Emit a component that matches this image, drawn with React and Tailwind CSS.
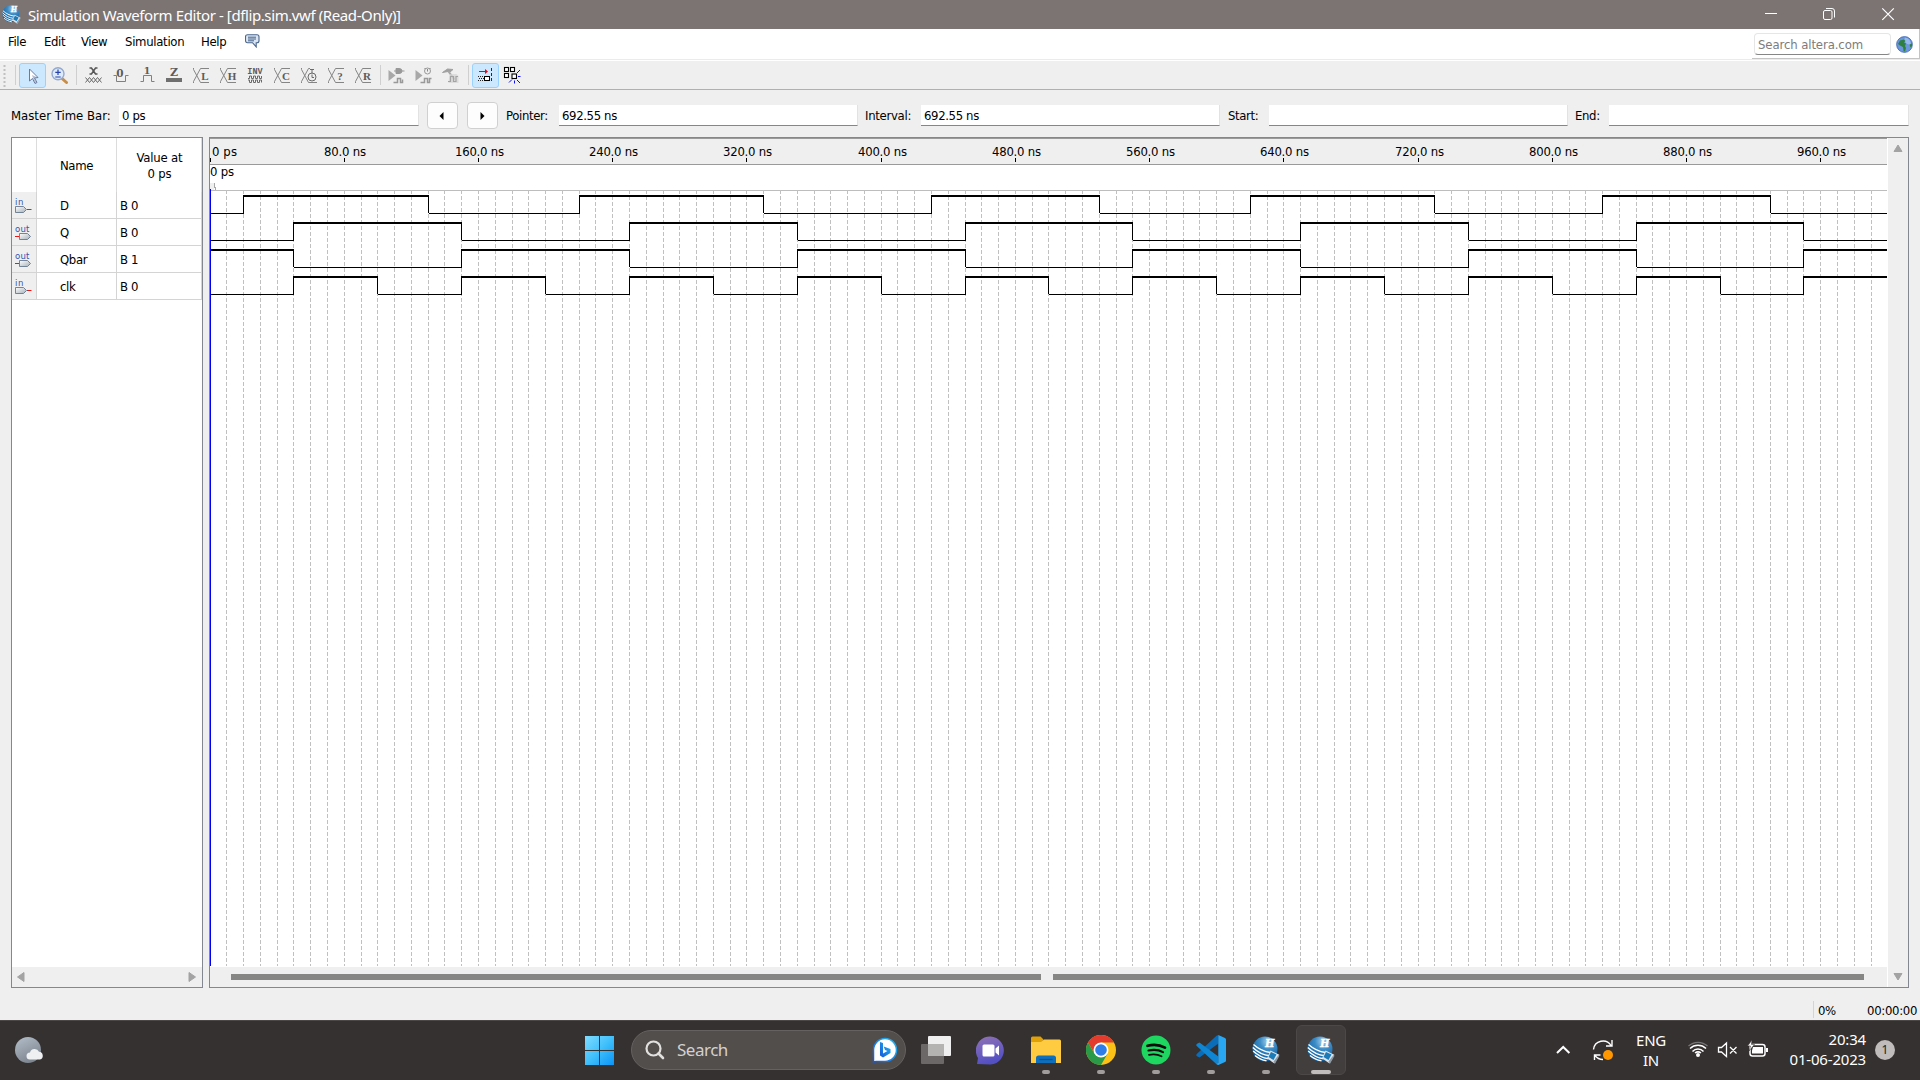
import React from "react";

const UI = "[font-family:'DejaVu_Sans_Condensed','DejaVu_Sans',sans-serif] [font-stretch:condensed] text-[13px] leading-4 tracking-[-0.36px] text-black whitespace-nowrap";

function QuartusLogo({ size }) {
  return (
    <svg width={size} height={size} viewBox="0 0 28 28" className="shrink-0">
      <defs>
        <radialGradient id="ball" cx="0.62" cy="0.2" r="0.8">
          <stop offset="0" stopColor="#a9cfea" />
          <stop offset="0.4" stopColor="#3c8cc6" />
          <stop offset="1" stopColor="#075a9c" />
        </radialGradient>
      </defs>
      <circle cx="13" cy="13" r="12.5" fill="url(#ball)" />
      <path d="M1.500 8.500C6 12.500 11 15.500 18.500 16.500M.8 11.500C5.500 16 10.500 19 17.500 19.800M1.200 15C5.500 19.200 10 21.800 16.500 22.800M3 19.500C6.500 22.500 10 24 14.500 24.800" fill="none" stroke="#fff" strokeWidth="1.400" />
      <text x="13" y="11" fontSize="12" fontWeight="bold" fontStyle="italic" fontFamily="Liberation Serif" fill="#fff" stroke="#fff" strokeWidth=".5">H</text>
      <path d="M18.500 14.500l8.800 4.200-4.800 8.800-7.500-5.200z" fill="#dbe4ea" />
      <path d="M19 16l5.500 2.500-3 5.500-5-3z" fill="#1b7ab8" />
      <path d="M21.500 25.500l5-6.500 1 .8-4.500 8z" fill="#8d9aa4" />
    </svg>
  );
}

function TitleBar() {
  return (
    <div className="flex h-[29px] shrink-0 items-center bg-[#7b7473] pl-0.5">
      <QuartusLogo size={19} />
      <span className="ml-[7px] text-[15px] leading-5 tracking-[-0.4px] whitespace-nowrap text-white [font-family:'Noto_Sans',sans-serif]">
        Simulation Waveform Editor - [dflip.sim.vwf (Read-Only)]
      </span>
      <svg width="200" height="29" viewBox="1720 0 200 29" className="ml-auto" fill="none" stroke="#fff">
        <path d="M1765 13.500h12" />
        <rect x="1823.500" y="10.500" width="8.500" height="9" rx="1.500" />
        <path d="M1826 8.500h6q2.500 0 2.500 2.500v6.500" />
        <path d="M1882.300 8.300l11.500 11.500M1893.800 8.300l-11.500 11.500" strokeWidth="1.200" />
      </svg>
    </div>
  );
}

function MenuBar() {
  return (
    <div className="flex h-[31px] shrink-0 border-b border-[#ebebeb] bg-white">
      <div className={`flex pl-2 pt-[5px] ${UI}`}>
        <span className="w-9">File</span>
        <span className="w-[37px]">Edit</span>
        <span className="w-11">View</span>
        <span className="w-19 tracking-[-0.3px]">Simulation</span>
        <span className="w-[44px]">Help</span>
        <svg width="16" height="14" viewBox="0 0 16 14" fill="none">
          <path d="M2.500.700h9.500q2 0 2 2v4q0 2-2 2h-.800v4.200L7.500 8.700h-5q-2 0-2-2v-4q0-2 2-2z" fill="#d9e5f3" stroke="#4a668c" strokeWidth="1.100" />
          <path d="M3 3.200h8M3 5h8M3 6.800h6" stroke="#39557e" strokeWidth="0.900" />
        </svg>
      </div>
      <div className="ml-auto flex h-[30px] w-[168px] items-start border-r border-b border-[#c4c4c4] pt-1 pl-[2px]">
        <div className="flex h-[22px] w-[137px] items-center rounded-sm border border-b-[#868686] border-[#e6e6e6] bg-white pt-0.5 pl-[3px] text-[13px] tracking-[-0.1px] whitespace-nowrap text-[#7c7c7c] [font-family:'DejaVu_Sans_Condensed','DejaVu_Sans',sans-serif] [font-stretch:condensed]">
          Search altera.com
        </div>
        <svg width="17" height="17" viewBox="0 0 17 17" className="mt-[3px] ml-[5px]">
          <circle cx="8.500" cy="8.500" r="7.900" fill="#6a96dc" stroke="#3c64b0" strokeWidth="0.800" />
          <path d="M9 1.500a7 7 0 0 1 6 7.500l-4-1-3-3z" fill="#a9c6f4" opacity=".7" />
          <path d="M2 8l2-3.500 4-1 1.500 1.500-1.500 1.500 2 1-1 2.500 1 2-1 3.500-1.500-.5-.5-4-3-1.500zM13.500 8.500l2.500-1v2.500l-1.500 1.500z" fill="#2f8040" />
        </svg>
      </div>
    </div>
  );
}

const G = "#6a6a6a";

function Glyph({ x = 10.5, y = 13, size = 11, font = "Liberation Serif", children }) {
  return (
    <text x={x} y={y} fontSize={size} fontWeight="bold" fontFamily={font} textAnchor="middle" fill="#5c5c5c">
      {children}
    </text>
  );
}

function Tool({ active, children }) {
  return (
    <div className={active ? "flex h-[25px] w-[27px] items-center justify-center rounded-[3px] border border-[#99d1ff] bg-[#cce8ff]" : "flex h-[25px] w-[27px] items-center justify-center"}>
      <svg width="17" height="17" viewBox="0 0 17 17" className="shrink-0 overflow-visible">{children}</svg>
    </div>
  );
}

function Divider({ className }) {
  return <div className={`h-5 w-px shrink-0 bg-[#cfcfcf] ${className}`} />;
}

function Letter({ children }) {
  return (
    <g>
      <path d="M.5 1v1.500L7.500 15.500H16M.5 16v-1.500L7.500 1.500H16" fill="none" stroke="#858585" />
      <Glyph x={12} y={12.5} size={11}>{children}</Glyph>
    </g>
  );
}

function ToolBar() {
  return (
    <div className="flex h-[30px] shrink-0 items-center border-t border-b border-t-white border-b-[#b0b0b0] bg-[#efefef]">
      <svg width="3" height="23" viewBox="0 0 3 23" className="ml-[3px]">
        <path d="M1.500 1v22" stroke="#c0c0c0" strokeWidth="2" strokeDasharray="2 2" />
      </svg>
      <Divider className="ml-[9px] mr-[3px]" />
      <Tool active>
        <path d="M5.500 2v12l3-2.500 2.500 5 2-1-2.500-4.500 3.500-.5z" fill="#fff" stroke="#6a7aa0" />
        <path d="M8 8l5.500 2.500-3.500.5 2.500 4.500-1.500.5-2-5z" fill="#8290b0" opacity=".6" />
      </Tool>
      <Tool>
        <path d="M10.500 11l5 4.500" stroke="#c98d45" strokeWidth="3" strokeLinecap="round" />
        <circle cx="7" cy="6.800" r="6" fill="#dceafa" stroke="#94a9cf" strokeWidth="1.400" />
        <path d="M7 2.500v5.500M4.300 5.300h5.400M4.300 10h5.400" stroke="#2743ab" strokeWidth="1.200" />
      </Tool>
      <Divider className="ml-[3px] mr-[3px]" />
      <Tool>
        <path d="M4.500 1h2l4 6h2M4.500 7h2l4-6h2" fill="none" stroke="#555" strokeWidth="1.500" />
        <path d="M.5 10.500l4 5 4-5 4 5 4-5M.5 15.500l4-5 4 5 4-5 4 5" fill="none" stroke={G} />
      </Tool>
      <Tool>
        <path d="M1.500 8.500h3v6h9v-6h3" fill="none" stroke="#808080" />
        <Glyph x={8} y={10} size={10.5} font="DejaVu Serif">0</Glyph>
      </Tool>
      <Tool>
        <path d="M1.500 14.500h3v-6h8v6h3" fill="none" stroke="#808080" />
        <Glyph x={8} y={7} size={9.5} font="DejaVu Serif">1</Glyph>
      </Tool>
      <Tool>
        <Glyph x={8} y={8.5} size={11} font="DejaVu Serif">Z</Glyph>
        <rect x="0" y="11" width="16" height="4" fill="#6f6f6f" />
      </Tool>
      <Tool><Letter>L</Letter></Tool>
      <Tool><Letter>H</Letter></Tool>
      <Tool>
        <Glyph x={8} y={6.5} size={8.5} font="Liberation Mono">INV</Glyph>
        <path d="M1 11.500h1.500v-2.500h2v2.500h2v-2.500h2v2.500h2v-2.500h2v2.500h2v-2.500M1 13h1.500v2.500h2v-2.500h2v2.500h2v-2.500h2v2.500h2v-2.500h2v2.500" fill="none" stroke={G} />
      </Tool>
      <Tool><Letter>C</Letter></Tool>
      <Tool>
        <path d="M.5 1v1.500L7.500 15.500H16M.5 16v-1.500L7.500 1.500H9" fill="none" stroke="#858585" />
        <circle cx="11" cy="10" r="4" fill="#efefef" stroke={G} />
        <path d="M11 2v4.500M9 2.500h4M11 7.500v3h2" stroke={G} fill="none" />
      </Tool>
      <Tool><Letter>?</Letter></Tool>
      <Tool><Letter>R</Letter></Tool>
      <Divider className="ml-[3px] mr-[2px]" />
      <Tool>
        <path d="M.5 3v11l7-5.500z" fill="#a8a8a8" />
        <path d="M6 4h2M14 4h2.500M8 1.500h3q3 0 3 2.500t-3 2.500h-3z" fill="#999" stroke="#999" />
        <path d="M5.500 15.500h4v-4h3v4h2v-3" fill="none" stroke="#999" strokeWidth="1.500" />
      </Tool>
      <Tool>
        <path d="M.5 3v11l7-5.500z" fill="#a8a8a8" />
        <circle cx="12.500" cy="4" r="3" fill="#eee" stroke="#999" />
        <path d="M12.500 2v2.500M9.500 1l1 1M15.500 1l-1 1" stroke="#888" />
        <path d="M5.500 15.500h4v-4h3v4h2v-4h2" fill="none" stroke="#999" strokeWidth="1.500" />
      </Tool>
      <Tool>
        <path d="M.5 5.500l5-3.500 5.500.5-3 2.500-2-.5z" fill="#a0a0a0" stroke="#a0a0a0" />
        <path d="M6.500 4.500l6 8" stroke="#a8a8a8" strokeWidth="2" />
        <path d="M7.500 7h7l2 2v7h-10z" fill="#d4d4d4" opacity=".7" />
        <path d="M6 14.500h2.500v-5h3v5h2.500v-5h2" fill="none" stroke="#a3a3a3" strokeWidth="1.200" />
      </Tool>
      <Divider className="ml-1 mr-[3px]" />
      <Tool active>
        <path d="M2 4.500h8" stroke="#f00010" />
        <path d="M8 2l3 2.500-3 2.500z" fill="#f00010" />
        <path d="M14.500 1v15" stroke="#1010f0" strokeDasharray="3 2" />
        <path d="M1 9.500h7M1 13.500h7M2 11.500h5" stroke="#222" strokeDasharray="1 1" />
        <rect x="7.500" y="9.500" width="5" height="4" fill="#fff" stroke="#000" />
      </Tool>
      <Tool>
        <g fill="#fff" stroke="#000" strokeWidth="1.100">
          <rect x=".5" y=".5" width="4" height="4" />
          <rect x="6.500" y=".5" width="4" height="4" />
          <rect x=".5" y="6.500" width="4" height="4" />
          <rect x="8" y="7" width="4.500" height="4.500" />
        </g>
        <path d="M13 6l3-3M14 9.500h2.500M13 13l3 3M10.500 13.500v3M8 12.500l-3 3" stroke="#1010f0" />
      </Tool>
    </div>
  );
}

function Field({ className, children }) {
  return <div className={`flex h-[21px] items-center border-r border-b border-r-[#e2e2e2] border-b-[#868686] bg-white pt-px pl-[3px] ${className}`}>{children}</div>;
}

function StepButton({ d, className }) {
  return (
    <div className="flex h-[27px] w-[31px] items-center justify-center rounded border border-[#d0d0d0] bg-[#fdfdfd]">
      <svg width="5" height="8" viewBox="0 0 5 8" className={className}><path d={d} fill="#000" /></svg>
    </div>
  );
}

function TimeRow() {
  return (
    <div className={`flex h-[47px] shrink-0 items-center pt-[4px] pl-[11px] ${UI}`}>
      <span className="w-[108px] tracking-[0px]">Master Time Bar:</span>
      <Field className="w-[300px]">0 ps</Field>
      <div className="ml-2 flex gap-[9px]">
        <StepButton d="M4.500 0v8L.5 4z" className="mr-[3px]" />
        <StepButton d="M.5 0v8L4.500 4z" />
      </div>
      <span className="ml-2 w-[53px]">Pointer:</span>
      <Field className="w-[299px]">692.55 ns</Field>
      <span className="ml-[7px] w-14 tracking-[-0.3px]">Interval:</span>
      <Field className="w-[299px]">692.55 ns</Field>
      <span className="ml-2 w-[41px]">Start:</span>
      <Field className="w-[299px]" />
      <span className="ml-[7px] w-[34px]">End:</span>
      <Field className="w-[300px]" />
    </div>
  );
}

function PinIcon({ kind }) {
  return (
    <svg width="18" height="18" viewBox="0 0 18 18">
      <defs>
        <linearGradient id="pin" x1="0" y1="0" x2="1" y2="1">
          <stop offset="0" stopColor="#fff" />
          <stop offset="1" stopColor="#a4afb9" />
        </linearGradient>
      </defs>
      <text x="0" y="8" fontSize="9.500" fontFamily="DejaVu Sans" fill="#2f55b5" textLength={kind === "in" ? 8 : 14}>{kind}</text>
      {kind === "in" ? (
        <g>
          <path d="M.5 9.500h8l3 3-3 3h-8z" fill="url(#pin)" stroke="#66788c" strokeWidth=".9" />
          <path d="M12 12.500h4.500" stroke="#f01515" />
        </g>
      ) : (
        <g>
          <path d="M4.500 9.500h8l3 3-3 3h-8z" fill="url(#pin)" stroke="#66788c" strokeWidth=".9" />
          <path d="M0 12.500h4" stroke="#f01515" />
        </g>
      )}
    </svg>
  );
}

const SIGNALS = [
  { kind: "in", name: "D", value: "B 0" },
  { kind: "out", name: "Q", value: "B 0" },
  { kind: "out", name: "Qbar", value: "B 1" },
  { kind: "in", name: "clk", value: "B 0" },
];

function SignalPanel() {
  return (
    <div className={`flex w-48 shrink-0 flex-col border border-[#828790] bg-white ${UI}`}>
      <div className="flex h-[54px]">
        <div className="w-[25px] border-r border-[#dcdcdc]" />
        <div className="flex w-20 items-center justify-center border-r border-[#dcdcdc] pt-0.5">Name</div>
        <div className="flex w-[85px] items-center justify-center border-r border-[#dcdcdc] pt-0.5 pl-px text-center tracking-[-0.2px]">Value at<br />0 ps</div>
      </div>
      {SIGNALS.map((s) => (
        <div key={s.name} className="flex h-[27px]">
          <div className="w-[25px] border-r border-b border-[#d4d4d4] bg-[#efefef] pt-[5px] pl-[3px]"><PinIcon kind={s.kind} /></div>
          <div className="flex w-20 items-center border-r border-b border-[#d4d4d4] pt-0.5 pl-[23px]">{s.name}</div>
          <div className="flex w-[85px] items-center border-r border-b border-[#d4d4d4] pt-0.5 pl-[3px]">{s.value}</div>
        </div>
      ))}
      <div className="mt-auto flex h-5 items-center justify-between bg-[#efefef] pr-[6px] pl-[5px]">
        <svg width="8" height="10" viewBox="0 0 8 10"><path d="M7 .5v9L.5 5z" fill="#a3a3a3" stroke="#a3a3a3" /></svg>
        <svg width="8" height="10" viewBox="0 0 8 10"><path d="M1 .5v9L7.500 5z" fill="#a3a3a3" stroke="#a3a3a3" /></svg>
      </div>
    </div>
  );
}

const LEFT = 210;
const RIGHT = 1887;
const at = (ns) => Math.floor(LEFT + ns * 1.67785) + 0.5;

const WAVES = [
  { high: 196, start: 0, edges: [20, 130, 220, 330, 430, 530, 620, 730, 830, 930] },
  { high: 223, start: 0, edges: [50, 150, 250, 350, 450, 550, 650, 750, 850, 950] },
  { high: 250, start: 1, edges: [50, 150, 250, 350, 450, 550, 650, 750, 850, 950] },
  { high: 277, start: 0, edges: Array.from({ length: 19 }, (_, i) => 50 + i * 50) },
];

function Wave({ high, start, edges }) {
  const xs = [LEFT, ...edges.map(at), RIGHT];
  let highs = "";
  let lows = "";
  let sides = "";
  for (let i = 0; i < xs.length - 1; i++) {
    const isHigh = (i + start) % 2 === 1;
    if (isHigh) highs += `M${xs[i] - 0.5} ${high}H${xs[i + 1] + 0.5}`;
    else lows += `M${xs[i]} ${high + 17.5}H${xs[i + 1]}`;
    if (i > 0) sides += `M${xs[i]} ${high - 1}V${high + 17}`;
  }
  return (
    <g stroke="#000" fill="none">
      <path d={highs} strokeWidth="2" />
      <path d={lows} />
      <path d={sides} />
    </g>
  );
}

function Plot() {
  const grid = Array.from({ length: 99 }, (_, i) => at((i + 1) * 10));
  const ticks = Array.from({ length: 13 }, (_, i) => i * 80);
  const font = { fontFamily: "'DejaVu Sans Condensed','DejaVu Sans'", fontStretch: "condensed", fontSize: 13 };
  return (
    <svg width="1677" height="829" viewBox="210 138 1677 829" className="shrink-0" shapeRendering="crispEdges">
      <rect x="210" y="138" width="1677" height="829" fill="#fff" />
      <rect x="210" y="138" width="1677" height="26" fill="#efefef" />
      <path d="M210 138.500H1887M210 164.500H1887" stroke="#9a9a9a" />
      <path d="M210 190.500H1887" stroke="#bdbdbd" />
      {ticks.map((t) => (
        <g key={t}>
          <path d={`M${at(t)} 158V162`} stroke="#000" />
          <text x={t === 0 ? 212 : at(t) - (t < 100 ? 20.5 : 23.5)} y="156" textLength={t === 0 ? 25 : t < 100 ? 42 : 49} style={font}>
            {t === 0 ? "0 ps" : `${t}.0 ns`}
          </text>
        </g>
      ))}
      <text x="210" y="176" textLength="24" style={font}>0 ps</text>
      <rect x="210" y="183" width="4" height="7" fill="#efefef" />
      <path d="M214.500 183v4h1v3" stroke="#a8a8a8" fill="none" />
      {grid.map((x) => (
        <path key={x} d={`M${x} 190V966`} stroke="#c0c0c0" strokeDasharray="4 2" />
      ))}
      {WAVES.map((w) => <Wave key={w.high} {...w} />)}
      <path d="M210.500 189V966" stroke="#0000f5" />
    </svg>
  );
}

function PlotPanel() {
  return (
    <div className="flex w-[1700px] shrink-0 border border-[#828790] bg-[#efefef]">
      <div className="flex w-[1677px] flex-col">
        <Plot />
        <div className="flex h-5 items-center justify-center gap-3">
          <div className="ml-[-2px] h-1.5 w-[810px] bg-[#868684]" />
          <div className="h-1.5 w-[811px] bg-[#868684]" />
        </div>
      </div>
      <div className="flex flex-1 flex-col items-center justify-between border-l border-white py-[6px] pr-px">
        <svg width="10" height="9" viewBox="0 0 10 9"><path d="M1 7.500h8L5 1z" fill="#a3a3a3" stroke="#a3a3a3" /></svg>
        <svg width="10" height="9" viewBox="0 0 10 9"><path d="M1 1.500h8L5 8z" fill="#a3a3a3" stroke="#a3a3a3" /></svg>
      </div>
    </div>
  );
}

function StatusBar() {
  return (
    <div className={`flex h-8 shrink-0 justify-end pt-[15px] ${UI}`}>
      <div className="-mt-0.5 h-[17px] w-px bg-[#d4d4d4]" />
      <span className="w-[53px] pl-1">0%</span>
      <span className="w-[53px] tracking-[-0.3px]">00:00:00</span>
    </div>
  );
}

function AppButton({ children, dot = true }) {
  return (
    <div className="flex h-[50px] w-[55px] flex-col items-center">
      <div className="flex h-[45px] items-center pt-[5px]">{children}</div>
      {dot && <div className="h-1 w-2 rounded-full bg-[#a09d9c]" />}
    </div>
  );
}

function TaskBar() {
  const seg = "[font-family:'Noto_Sans',sans-serif] whitespace-nowrap text-white";
  return (
    <div className="flex h-[60px] shrink-0 items-center border-t border-[#4b4746] bg-[#353130] pb-px">
      <svg width="30" height="28" viewBox="0 0 30 28" className="ml-[14px]">
        <defs>
          <linearGradient id="moon" x1="0" y1="0" x2="0.5" y2="1">
            <stop offset="0" stopColor="#b4bfcb" />
            <stop offset="1" stopColor="#7e8690" />
          </linearGradient>
        </defs>
        <circle cx="14" cy="14" r="13" fill="url(#moon)" />
        <path d="M16 23.500a3.500 3.500 0 0 1 0-7 4.800 4.800 0 0 1 9-.8 4 4 0 0 1 1 7.800z" fill="#eef0f2" />
      </svg>
      <svg width="29" height="29" viewBox="0 0 29 29" className="ml-[541px]">
        <defs>
          <linearGradient id="win" x1="0" y1="0" x2="1" y2="1">
            <stop offset="0" stopColor="#7fdcff" />
            <stop offset="0.500" stopColor="#40c0fb" />
            <stop offset="1" stopColor="#0a94f8" />
          </linearGradient>
        </defs>
        <path d="M0 0h14v14H0zM15 0h14v14H15zM0 15h14v14H0zM15 15h14v14H15z" fill="url(#win)" />
      </svg>
      <div className="ml-[17px] flex h-10 w-[275px] items-center rounded-full border border-[#656160] bg-[#524e4c]">
        <svg width="20" height="20" viewBox="0 0 20 20" fill="none" stroke="#e2e0df" strokeWidth="2.200" className="ml-[13px]">
          <circle cx="8.500" cy="8.500" r="7" />
          <path d="M13.500 13.500l4.500 4.500" strokeLinecap="round" strokeWidth="2.600" />
        </svg>
        <span className="ml-3 text-[17px] tracking-[-0.5px] text-[#d3d1d0] [font-family:'Noto_Sans',sans-serif]">Search</span>
        <svg width="26" height="26" viewBox="0 0 26 26" className="ml-auto mr-[7px]">
          <defs>
            <linearGradient id="bing" x1="1" y1="0" x2="0" y2="1">
              <stop offset="0" stopColor="#22b8ee" />
              <stop offset="1" stopColor="#1657d8" />
            </linearGradient>
          </defs>
          <path d="M1.500 25V13A11.500 11.500 0 1 1 13 24.500H4z" fill="#fff" stroke="url(#bing)" strokeWidth="1.500" />
          <path d="M8 5l3 1v10.500l4.500-2.500-2.500-1-1.300-3.500 6.800 2.500v4L11 20.500l-3-2z" fill="url(#bing)" />
        </svg>
      </div>
      <svg width="30" height="28" viewBox="0 0 30 28" className="ml-[15px]">
        <rect x="7" y="0" width="23" height="20" rx="1" fill="#efefef" />
        <rect x="0" y="8" width="23" height="20" rx="1" fill="#6b6867" />
        <rect x="7" y="8" width="16" height="12" fill="#b5b3b2" />
      </svg>
      <div className="ml-[12px] flex">
        <AppButton dot={false}>
          <svg width="29" height="29" viewBox="0 0 29 29">
            <defs>
              <linearGradient id="chat" x1="0" y1="0" x2="0.300" y2="1">
                <stop offset="0" stopColor="#9172b4" />
                <stop offset="1" stopColor="#5350c4" />
              </linearGradient>
            </defs>
            <path d="M1 28l1-6A14 14 0 1 1 14.500 28.500z" fill="url(#chat)" />
            <rect x="6.500" y="8.500" width="12" height="12" rx="1.500" fill="#fff" />
            <path d="M19.500 12.500l3.500-3v10l-3.500-3z" fill="#fff" />
          </svg>
        </AppButton>
        <AppButton>
          <svg width="30" height="28" viewBox="0 0 30 28">
            <path d="M0 2q0-1.500 1.500-1.500h8l3 3-3 5H0z" fill="#e0a008" />
            <path d="M0 6h10l3-2.500h15.500q1.500 0 1.500 1.500v22H0z" fill="#fecb41" />
            <path d="M5 27v-5q0-2.500 2.500-2.500h15q2.500 0 2.500 2.500v5z" fill="#0f6fbd" />
            <path d="M8.500 23.500h13" stroke="#0b4f8e" strokeWidth="1.300" />
          </svg>
        </AppButton>
        <AppButton>
          <svg width="30" height="30" viewBox="0 0 30 30">
            <circle cx="15" cy="15" r="15" fill="#fbc116" />
            <path d="M2 7.500A15 15 0 0 1 28 7.500H15L8.500 18.700z" fill="#e33b2e" />
            <path d="M2 7.500A15 15 0 0 0 15 30l6.500-11.300H8.500z" fill="#2b9a48" />
            <circle cx="15" cy="15" r="7.500" fill="#fff" />
            <circle cx="15" cy="15" r="5.800" fill="#2f7de9" />
          </svg>
        </AppButton>
        <AppButton>
          <svg width="30" height="30" viewBox="-.5 -.5 30 30" fill="none" stroke="#0b0b0b" strokeLinecap="round">
            <circle cx="14.500" cy="14.500" r="14.500" fill="#1ed760" stroke="none" />
            <path d="M6 10.300q9.500-2.500 17.500 1.800" strokeWidth="2.700" />
            <path d="M7 15q8-2 14.500 1.600" strokeWidth="2.200" />
            <path d="M7.500 19.300q7-1.500 12.500 1.500" strokeWidth="1.800" />
          </svg>
        </AppButton>
        <AppButton>
          <svg width="30" height="30" viewBox="0 0 30 30">
            <path d="M22.300 0v8.500L3.500 22.500 1 21.300q-1.500-1.300 0-2.600L20.500.8z" fill="#0b6db8" />
            <path d="M22.300 30v-8.500L3.500 7.500 1 8.700q-1.500 1.300 0 2.600L20.500 29.200z" fill="#0f86d3" />
            <path d="M22.300 0l6.700 3q1 .5 1 1.500v21q0 1-1 1.500l-6.700 3q-1-.3-1.800-1l1.800-1z" fill="#2aa7f3" />
          </svg>
        </AppButton>
        <AppButton><QuartusLogo size={28} /></AppButton>
      </div>
      <div className="ml-[3px] flex h-[50px] w-[50px] flex-col items-center rounded-md border border-[#4c4847] bg-[#423e3d]">
        <div className="flex h-11 items-center pt-1"><QuartusLogo size={28} /></div>
        <div className="h-1 w-5 rounded-full bg-[#c0bdbc]" />
      </div>
      <svg width="60" height="30" viewBox="1555 1035 60 30" className="ml-[209px]" fill="none" stroke="#fff">
        <path d="M1557 1053l6.200-6 6.200 6" strokeWidth="2" />
        <path d="M1593.500 1049.500a9.500 9.500 0 0 1 17.500-4M1612 1040v6h-6M1594.500 1060v-5h6M1595 1055.500q3 4 8 4" strokeWidth="1.400" />
        <circle cx="1608" cy="1055" r="5" fill="#ff9800" stroke="none" />
      </svg>
      <div className={`ml-[16px] w-10 text-center text-[15px] leading-5 tracking-[-0.3px] ${seg}`}>ENG<br />IN</div>
      <svg width="84" height="30" viewBox="1687 1035 84 30" className="ml-4" fill="none" stroke="#fff">
        <circle cx="1698" cy="1055" r="2" fill="#fff" stroke="none" />
        <path d="M1692.500 1051.500a7.500 7.500 0 0 1 11 0M1695 1053a5 5 0 0 1 6 0" strokeWidth="1.500" />
        <path d="M1690 1048.500a11.500 11.500 0 0 1 16 0" strokeWidth="1.500" />
        <path d="M1688.500 1046a14 14 0 0 1 19 0" stroke="#777" strokeWidth="1.300" />
        <path d="M1718.500 1047.500h3l5-4.500v13.500l-5-4.500h-3zM1730 1047l6.500 6.500M1736.500 1047l-6.500 6.500" strokeWidth="1.300" />
        <rect x="1750" y="1044.500" width="15" height="11.500" rx="2.500" strokeWidth="1.500" />
        <path d="M1753 1047h10v6.500h-11v-3zM1766 1048h2v4h-2z" fill="#fff" stroke="none" />
        <path d="M1752 1040l-4.500 6h3l-1.500 5 5.500-6.500h-3z" fill="#fff" stroke="#353130" strokeWidth=".6" />
      </svg>
      <div className={`ml-[14px] w-[81px] pb-0.5 text-right text-[15px] leading-5 tracking-[-0.18px] ${seg}`}>20:34<br />01-06-2023</div>
      <div className="ml-[9px] flex h-5 w-5 items-center justify-center rounded-full bg-[#bfbcbb] text-[12px] text-[#222] [font-family:'Noto_Sans',sans-serif]">1</div>
    </div>
  );
}

export default function App() {
  return (
    <div className="flex h-[1080px] w-[1920px] flex-col overflow-hidden bg-[#efefef]">
      <TitleBar />
      <MenuBar />
      <ToolBar />
      <TimeRow />
      <div className="flex h-[851px] shrink-0 gap-[6px] pl-[11px]">
        <SignalPanel />
        <PlotPanel />
      </div>
      <StatusBar />
      <TaskBar />
    </div>
  );
}
